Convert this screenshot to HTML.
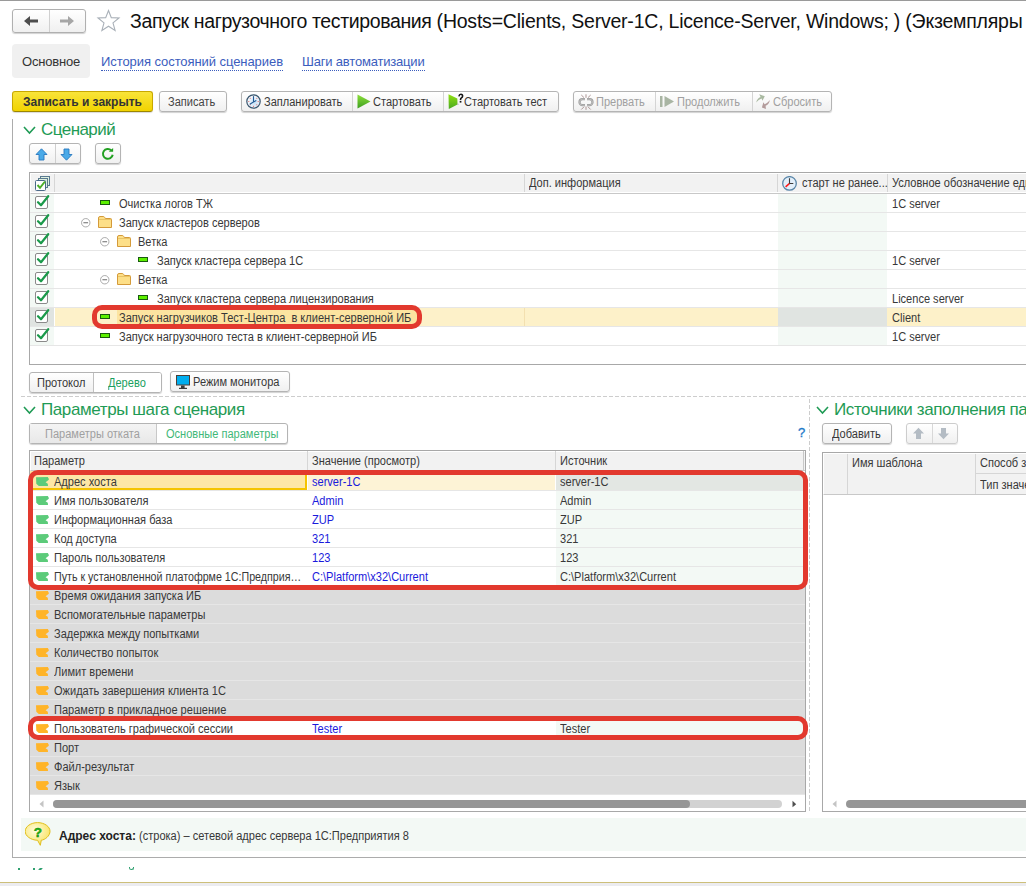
<!DOCTYPE html>
<html><head><meta charset="utf-8">
<style>
*{box-sizing:border-box;margin:0;padding:0}
html,body{width:1026px;height:886px;overflow:hidden;background:#fff;font-family:"Liberation Sans",sans-serif;color:#333}
.a{position:absolute}
.t{position:absolute;margin-top:1px;font-size:12px;letter-spacing:0;white-space:pre;line-height:14px;color:#383838;transform:scaleX(0.92);transform-origin:0 0}
.btn{position:absolute;border:1px solid #b4b4b4;border-radius:3px;background:linear-gradient(#fff,#f0f0f0);box-shadow:0 1px 1px rgba(0,0,0,.18)}
.div{position:absolute;top:0;bottom:0;width:1px;background:#cfcfcf}
.sec{position:absolute;font-size:17px;color:#1f9b55;white-space:nowrap;line-height:20px}
.chev{position:absolute;width:12px;height:8px}
.hl{position:absolute;height:1px;background:#e4e4e4}
.vl{position:absolute;width:1px;background:#c8c8c8}
</style></head><body>
<!-- top line -->
<div class="a" style="left:0;top:0;width:1026px;height:1px;background:#9a9a9a"></div>

<!-- nav buttons -->
<div class="btn" style="left:12px;top:9px;width:74px;height:24px;border-color:#b0b0b0"></div>
<div class="a" style="left:49px;top:10px;width:1px;height:22px;background:#d0d0d0"></div>
<svg class="a" style="left:23px;top:15px" width="16" height="12" viewBox="0 0 16 12"><path d="M1 6 L7 1 L7 4.5 L15 4.5 L15 7.5 L7 7.5 L7 11 Z" fill="#4d4d4d"/></svg>
<svg class="a" style="left:59px;top:15px" width="16" height="12" viewBox="0 0 16 12"><path d="M15 6 L9 1 L9 4.5 L1 4.5 L1 7.5 L9 7.5 L9 11 Z" fill="#a6a6a6"/></svg>
<svg class="a" style="left:96px;top:9px" width="25" height="24" viewBox="0 0 25 24"><path d="M12.5 1.5 L15.3 8.6 L23 9 L17 13.9 L19.1 21.4 L12.5 17.2 L5.9 21.4 L8 13.9 L2 9 L9.7 8.6 Z" fill="none" stroke="#a9b0b8" stroke-width="1.1"/></svg>

<div class="a" style="left:130px;top:9px;font-size:19.5px;letter-spacing:-0.22px;color:#111;white-space:nowrap;line-height:24px"><span style="letter-spacing:-0.37px">Запуск нагрузочного тестирования </span>(Hosts=Clients, Server-1C, Licence-Server, Windows; ) (Экземпляры</div>

<!-- tabs -->
<div class="a" style="left:12px;top:44px;width:78px;height:34px;background:#f0f0f0;border-radius:4px"></div>
<div class="a" style="left:22px;top:54px;font-size:13px;letter-spacing:-0.2px;color:#333;line-height:16px">Основное</div>
<div class="a" style="left:101px;top:54px;font-size:13px;letter-spacing:-0.07px;color:#3b5dbd;line-height:16px;border-bottom:1px dotted #3b5dbd;padding-bottom:0">История состояний сценариев</div>
<div class="a" style="left:302px;top:54px;font-size:13px;letter-spacing:-0.19px;color:#3b5dbd;line-height:16px;border-bottom:1px dotted #3b5dbd">Шаги автоматизации</div>

<!-- toolbar -->
<div class="a" style="left:12px;top:91px;width:141px;height:21px;border:1px solid #c8a800;border-bottom-color:#9c8600;border-radius:3px;background:linear-gradient(#f9e43a,#f1d300);box-shadow:0 1px 1px rgba(0,0,0,.15)"></div>
<div class="t" style="left:23px;top:94px;font-weight:bold;letter-spacing:0;color:#333;transform:none">Записать и закрыть</div>
<div class="btn" style="left:159px;top:91px;width:68px;height:21px"></div>
<div class="t" style="left:168px;top:94px;color:#444">Записать</div>

<div class="btn" style="left:241px;top:91px;width:318px;height:21px"></div>
<div class="a" style="left:352px;top:92px;width:1px;height:19px;background:#d4d4d4"></div>
<div class="a" style="left:443px;top:92px;width:1px;height:19px;background:#d4d4d4"></div>
<div class="t" style="left:264px;top:94px">Запланировать</div>
<div class="t" style="left:373px;top:94px">Стартовать</div>
<div class="t" style="left:464px;top:94px">Стартовать тест</div>

<div class="btn" style="left:573px;top:91px;width:259px;height:21px"></div>
<div class="a" style="left:655px;top:92px;width:1px;height:19px;background:#d4d4d4"></div>
<div class="a" style="left:752px;top:92px;width:1px;height:19px;background:#d4d4d4"></div>
<div class="t" style="left:596px;top:94px;color:#a0a0a0">Прервать</div>
<div class="t" style="left:677px;top:94px;color:#a0a0a0">Продолжить</div>
<div class="t" style="left:773px;top:94px;color:#a0a0a0">Сбросить</div>

<!-- toolbar icons -->
<svg class="a" style="left:246px;top:94px" width="15" height="15" viewBox="0 0 15 15"><defs><radialGradient id="cg" cx="0.6" cy="0.6" r="0.7"><stop offset="0" stop-color="#c8e0f4"/><stop offset="1" stop-color="#fff"/></radialGradient></defs><circle cx="7.5" cy="7.5" r="6.7" fill="url(#cg)" stroke="#3a566e" stroke-width="1.2"/><g fill="#e05050"><circle cx="7.5" cy="2.8" r="0.55"/><circle cx="7.5" cy="12.2" r="0.55"/><circle cx="2.8" cy="7.5" r="0.55"/><circle cx="12.2" cy="7.5" r="0.55"/><circle cx="4.2" cy="4.2" r="0.5"/><circle cx="10.8" cy="4.2" r="0.5"/><circle cx="4.2" cy="10.8" r="0.5"/><circle cx="10.8" cy="10.8" r="0.5"/></g><path d="M7.5 2.2 V8 L3.8 10.3 M7.5 8 L10.3 6.5" fill="none" stroke="#1f5a96" stroke-width="1.1"/></svg>
<svg class="a" style="left:357px;top:94px" width="14" height="15" viewBox="0 0 14 15"><defs><linearGradient id="pg" x1="0" y1="0" x2="0" y2="1"><stop offset="0" stop-color="#8ee03a"/><stop offset="1" stop-color="#3c9e20"/></linearGradient></defs><path d="M0.5 0.5 L13.5 7.5 L0.5 14.5 Z" fill="url(#pg)"/></svg>
<svg class="a" style="left:448px;top:93px" width="16" height="17" viewBox="0 0 16 17"><defs><linearGradient id="pg2" x1="0" y1="0" x2="0" y2="1"><stop offset="0" stop-color="#90e010"/><stop offset="1" stop-color="#4aa822"/></linearGradient></defs><path d="M0.5 1.3 L9.3 5.4 L9.5 11.6 L0.8 16 Z" fill="url(#pg2)"/><path d="M9.5 10 L10.8 11.2 L9.5 12.2 Z" fill="#b0a8b8"/><path d="M10.9 3.3 Q11.3 1.3 12.9 1.3 Q14.6 1.3 14.6 3 Q14.6 4.1 13.4 4.9 Q12.5 5.5 12.5 6.9" fill="none" stroke="#151515" stroke-width="1.6"/><rect x="11.7" y="7.9" width="1.7" height="1.7" fill="#151515"/></svg>
<svg class="a" style="left:578px;top:94px" width="16" height="16" viewBox="0 0 16 16"><g fill="none"><path d="M7 5.2 H4.5 A3 3 0 0 0 4.5 11.2 H7" stroke="#9c9c9c" stroke-width="2.2"/><path d="M9 5.2 H11.5 A3 3 0 0 1 11.5 11.2 H9" stroke="#9c9c9c" stroke-width="2.2"/><path d="M7 5.2 H4.5 A3 3 0 0 0 4.5 11.2 H7 M9 5.2 H11.5 A3 3 0 0 1 11.5 11.2 H9" stroke="#d4d4d4" stroke-width="0.6"/></g><g stroke="#a48a8a" stroke-width="0.9"><path d="M8 0.3 V3.8 M3.3 1 L6 3.6 M12.7 1 L10 3.6 M8 12.5 V15.8 M3.3 15.5 L6 12.8 M12.7 15.5 L10 12.8"/></g></svg>
<svg class="a" style="left:660px;top:96px" width="15" height="11" viewBox="0 0 15 11"><rect x="0" y="0" width="2.5" height="11" fill="#a9b5a3"/><path d="M4.5 0 L14 5.5 L4.5 11 Z" fill="#a9b5a3"/></svg>
<svg class="a" style="left:756px;top:94px" width="15" height="16" viewBox="0 0 15 16"><path d="M0.2 8.4 C0.8 5.5 2.5 3.8 4.6 2.9 L3.2 0.2 L8.8 2.2 L6.4 6.7 L5.6 4.6 C3.5 5.4 1.8 6.8 0.2 8.4 Z" fill="#a9b9a1"/><path d="M13.9 5.9 C13.4 9 11.8 10.8 9.6 11.8 L9.9 14.9 L5.9 13.4 L7.4 8.2 L8.6 10.2 C10.8 9.3 12.5 7.8 13.9 5.9 Z" fill="#b39b9b"/></svg>
<!-- section frame -->
<div class="a" style="left:12px;top:119px;width:1px;height:739px;background:#acacac"></div>
<div class="a" style="left:12px;top:857px;width:1014px;height:1px;background:#acacac"></div>

<!-- scenario header -->
<svg class="a" style="left:23px;top:126px" width="13" height="9" viewBox="0 0 13 9"><path d="M1 1 L6.5 7 L12 1" fill="none" stroke="#1f9b55" stroke-width="1.6"/></svg>
<div class="sec" style="left:41px;top:120px;letter-spacing:-0.55px">Сценарий</div>
<div class="btn" style="left:29px;top:143px;width:52px;height:21px"></div>
<div class="a" style="left:55px;top:144px;width:1px;height:19px;background:#cfcfcf"></div>
<svg class="a" style="left:35px;top:148px" width="13" height="13" viewBox="0 0 13 13"><path d="M6.5 0.8 L12 6.5 H9 V12 H4 V6.5 H1 Z" fill="#4aaae8" stroke="#2878c0" stroke-width="0.9"/></svg>
<svg class="a" style="left:60px;top:148px" width="13" height="13" viewBox="0 0 13 13"><path d="M6.5 12.2 L12 6.5 H9 V1 H4 V6.5 H1 Z" fill="#4aaae8" stroke="#2878c0" stroke-width="0.9"/></svg>
<div class="btn" style="left:95px;top:143px;width:26px;height:21px"></div>
<svg class="a" style="left:98px;top:144px" width="22" height="20" viewBox="0 0 22 20"><path d="M14.7 10.75 A4.9 4.9 0 1 1 13.2 6.3" fill="none" stroke="#22a022" stroke-width="2"/><path d="M15.1 3.9 L10.8 7.8 L15.1 7.8 Z" fill="#22a022"/></svg>
<!-- table 1 -->
<div class="a" style="left:29px;top:172px;width:997px;height:193px;border:1px solid #a8a8a8;border-right:none;background:#fff"></div>
<div class="a" style="left:30px;top:173px;width:996px;height:21px;background:#f2f2f2;border-top:1px solid #fff;border-left:1px solid #fff;border-bottom:1px solid #c8c8c8;box-shadow:inset 0 -1px #fff"></div>
<div class="a" style="left:54px;top:174px;width:1px;height:18px;background:#d6d6d6"></div>
<div class="a" style="left:524px;top:174px;width:1px;height:18px;background:#d6d6d6"></div>
<div class="a" style="left:777px;top:174px;width:1px;height:18px;background:#d6d6d6"></div>
<div class="a" style="left:887px;top:174px;width:1px;height:18px;background:#d6d6d6"></div>
<svg class="a" style="left:34px;top:175px" width="17" height="17" viewBox="0 0 17 17"><rect x="6.5" y="1.5" width="9" height="9" fill="#dff0e0" stroke="#5a7a90"/><rect x="4.5" y="3.5" width="9" height="9" fill="#dff0e0" stroke="#5a7a90"/><rect x="1.5" y="5.5" width="10" height="10" rx="1" fill="#fff" stroke="#4a6a88"/><path d="M3.5 10 L6 12.8 L11 6.5" fill="none" stroke="#4cae2a" stroke-width="2"/></svg>
<div class="t" style="left:529px;top:175px">Доп. информация</div>
<svg class="a" style="left:782px;top:176px" width="15" height="15" viewBox="0 0 15 15"><circle cx="7.5" cy="7.4" r="6.8" fill="#e2effa" stroke="#5a86a8" stroke-width="1.3"/><path d="M7.5 2.2 V7.5 H11.3" fill="none" stroke="#3c3c3c" stroke-width="1.1"/><path d="M7.3 7.6 L3.6 10.9" stroke="#ff1a1a" stroke-width="1.5"/></svg>
<div class="t" style="left:801px;top:175px;margin-left:1px">старт не ранее...</div>
<div class="t" style="left:892px;top:175px">Условное обозначение единицы</div>
<div class="a" style="left:30px;top:194px;width:24px;height:151px;background:#f3f9f5"></div>
<div class="a" style="left:778px;top:194px;width:109px;height:151px;background:#f3f9f5"></div>
<div class="hl" style="left:30px;top:212px;width:996px;background:#e6e6e6"></div>
<svg class="a" style="left:35px;top:195px" width="15" height="14" viewBox="0 0 15 14"><rect x="0.5" y="1.5" width="12" height="12" rx="1.5" fill="#fff" stroke="#8a8a8a" stroke-width="1"/><path d="M3 7.2 L6 10.3 L13.2 1.2" fill="none" stroke="#1a9a4a" stroke-width="2.2" stroke-linecap="round" stroke-linejoin="round"/></svg>
<div class="a" style="left:100px;top:200px;width:10px;height:5px;background:#5cf000;border:1px solid #1a5a10"></div>
<div class="t" style="left:119px;top:196px">Очистка логов ТЖ</div>
<div class="t" style="left:892px;top:196px">1C server</div>
<div class="hl" style="left:30px;top:231px;width:996px;background:#e6e6e6"></div>
<svg class="a" style="left:35px;top:214px" width="15" height="14" viewBox="0 0 15 14"><rect x="0.5" y="1.5" width="12" height="12" rx="1.5" fill="#fff" stroke="#8a8a8a" stroke-width="1"/><path d="M3 7.2 L6 10.3 L13.2 1.2" fill="none" stroke="#1a9a4a" stroke-width="2.2" stroke-linecap="round" stroke-linejoin="round"/></svg>
<svg class="a" style="left:81px;top:218px" width="10" height="10" viewBox="0 0 10 10"><circle cx="4.75" cy="4.75" r="4.2" fill="#fff" stroke="#a0a0a0" stroke-width="0.9"/><path d="M2.4 4.75 H7.1" stroke="#6a6a6a" stroke-width="1"/></svg>
<svg class="a" style="left:98px;top:216px" width="14" height="12" viewBox="0 0 14 12"><path d="M0.5 2 Q0.5 0.5 2 0.5 H5.3 Q6.2 0.5 6.7 1.4 L7.3 2.5 H12.5 Q13.5 2.5 13.5 3.5 V11.5 H0.5 Z" fill="#fddf88" stroke="#d49a3a" stroke-width="1"/><path d="M1 3.5 H13" stroke="#e9c466" stroke-width="1"/></svg>
<div class="t" style="left:119px;top:215px">Запуск кластеров серверов</div>
<div class="hl" style="left:30px;top:250px;width:996px;background:#e6e6e6"></div>
<svg class="a" style="left:35px;top:233px" width="15" height="14" viewBox="0 0 15 14"><rect x="0.5" y="1.5" width="12" height="12" rx="1.5" fill="#fff" stroke="#8a8a8a" stroke-width="1"/><path d="M3 7.2 L6 10.3 L13.2 1.2" fill="none" stroke="#1a9a4a" stroke-width="2.2" stroke-linecap="round" stroke-linejoin="round"/></svg>
<svg class="a" style="left:100px;top:237px" width="10" height="10" viewBox="0 0 10 10"><circle cx="4.75" cy="4.75" r="4.2" fill="#fff" stroke="#a0a0a0" stroke-width="0.9"/><path d="M2.4 4.75 H7.1" stroke="#6a6a6a" stroke-width="1"/></svg>
<svg class="a" style="left:117px;top:235px" width="14" height="12" viewBox="0 0 14 12"><path d="M0.5 2 Q0.5 0.5 2 0.5 H5.3 Q6.2 0.5 6.7 1.4 L7.3 2.5 H12.5 Q13.5 2.5 13.5 3.5 V11.5 H0.5 Z" fill="#fddf88" stroke="#d49a3a" stroke-width="1"/><path d="M1 3.5 H13" stroke="#e9c466" stroke-width="1"/></svg>
<div class="t" style="left:138px;top:234px">Ветка</div>
<div class="hl" style="left:30px;top:269px;width:996px;background:#e6e6e6"></div>
<svg class="a" style="left:35px;top:252px" width="15" height="14" viewBox="0 0 15 14"><rect x="0.5" y="1.5" width="12" height="12" rx="1.5" fill="#fff" stroke="#8a8a8a" stroke-width="1"/><path d="M3 7.2 L6 10.3 L13.2 1.2" fill="none" stroke="#1a9a4a" stroke-width="2.2" stroke-linecap="round" stroke-linejoin="round"/></svg>
<div class="a" style="left:138px;top:257px;width:10px;height:5px;background:#5cf000;border:1px solid #1a5a10"></div>
<div class="t" style="left:157px;top:253px">Запуск кластера сервера 1С</div>
<div class="t" style="left:892px;top:253px">1C server</div>
<div class="hl" style="left:30px;top:288px;width:996px;background:#e6e6e6"></div>
<svg class="a" style="left:35px;top:271px" width="15" height="14" viewBox="0 0 15 14"><rect x="0.5" y="1.5" width="12" height="12" rx="1.5" fill="#fff" stroke="#8a8a8a" stroke-width="1"/><path d="M3 7.2 L6 10.3 L13.2 1.2" fill="none" stroke="#1a9a4a" stroke-width="2.2" stroke-linecap="round" stroke-linejoin="round"/></svg>
<svg class="a" style="left:100px;top:275px" width="10" height="10" viewBox="0 0 10 10"><circle cx="4.75" cy="4.75" r="4.2" fill="#fff" stroke="#a0a0a0" stroke-width="0.9"/><path d="M2.4 4.75 H7.1" stroke="#6a6a6a" stroke-width="1"/></svg>
<svg class="a" style="left:117px;top:273px" width="14" height="12" viewBox="0 0 14 12"><path d="M0.5 2 Q0.5 0.5 2 0.5 H5.3 Q6.2 0.5 6.7 1.4 L7.3 2.5 H12.5 Q13.5 2.5 13.5 3.5 V11.5 H0.5 Z" fill="#fddf88" stroke="#d49a3a" stroke-width="1"/><path d="M1 3.5 H13" stroke="#e9c466" stroke-width="1"/></svg>
<div class="t" style="left:138px;top:272px">Ветка</div>
<div class="hl" style="left:30px;top:307px;width:996px;background:#e6e6e6"></div>
<svg class="a" style="left:35px;top:290px" width="15" height="14" viewBox="0 0 15 14"><rect x="0.5" y="1.5" width="12" height="12" rx="1.5" fill="#fff" stroke="#8a8a8a" stroke-width="1"/><path d="M3 7.2 L6 10.3 L13.2 1.2" fill="none" stroke="#1a9a4a" stroke-width="2.2" stroke-linecap="round" stroke-linejoin="round"/></svg>
<div class="a" style="left:138px;top:295px;width:10px;height:5px;background:#5cf000;border:1px solid #1a5a10"></div>
<div class="t" style="left:157px;top:291px">Запуск кластера сервера лицензирования</div>
<div class="t" style="left:892px;top:291px">Licence server</div>
<div class="a" style="left:30px;top:308px;width:24px;height:18px;background:#e0e4e1"></div>
<div class="a" style="left:55px;top:308px;width:971px;height:18px;background:#fdf1c9"></div>
<div class="a" style="left:117px;top:308px;width:300px;height:18px;background:#fce4a0"></div>
<div class="a" style="left:524px;top:308px;width:1px;height:18px;background:#f3e0b0"></div>
<div class="a" style="left:778px;top:308px;width:109px;height:18px;background:#e0e4e1"></div>
<div class="hl" style="left:30px;top:326px;width:996px;background:#e6e6e6"></div>
<svg class="a" style="left:35px;top:309px" width="15" height="14" viewBox="0 0 15 14"><rect x="0.5" y="1.5" width="12" height="12" rx="1.5" fill="#fff" stroke="#8a8a8a" stroke-width="1"/><path d="M3 7.2 L6 10.3 L13.2 1.2" fill="none" stroke="#1a9a4a" stroke-width="2.2" stroke-linecap="round" stroke-linejoin="round"/></svg>
<div class="a" style="left:100px;top:314px;width:10px;height:5px;background:#5cf000;border:1px solid #1a5a10"></div>
<div class="t" style="left:119px;top:310px">Запуск нагрузчиков Тест-Центра  в клиент-серверной ИБ</div>
<div class="t" style="left:892px;top:310px">Client</div>
<div class="hl" style="left:30px;top:345px;width:996px;background:#e6e6e6"></div>
<svg class="a" style="left:35px;top:328px" width="15" height="14" viewBox="0 0 15 14"><rect x="0.5" y="1.5" width="12" height="12" rx="1.5" fill="#fff" stroke="#8a8a8a" stroke-width="1"/><path d="M3 7.2 L6 10.3 L13.2 1.2" fill="none" stroke="#1a9a4a" stroke-width="2.2" stroke-linecap="round" stroke-linejoin="round"/></svg>
<div class="a" style="left:100px;top:333px;width:10px;height:5px;background:#5cf000;border:1px solid #1a5a10"></div>
<div class="t" style="left:119px;top:329px">Запуск нагрузочного теста в клиент-серверной ИБ</div>
<div class="t" style="left:892px;top:329px">1C server</div>
<div class="a" style="left:92px;top:305px;width:330px;height:24px;border:5px solid #e2392e;border-radius:10px"></div>
<div class="btn" style="left:29px;top:372px;width:133px;height:21px"></div>
<div class="a" style="left:94px;top:373px;width:67px;height:19px;background:#fff;border-radius:0 2px 2px 0"></div>
<div class="a" style="left:93px;top:373px;width:1px;height:19px;background:#c0c0c0"></div>
<div class="t" style="left:37px;top:375px">Протокол</div>
<div class="t" style="left:108px;top:375px;color:#1aa060">Дерево</div>
<div class="btn" style="left:170px;top:371px;width:120px;height:21px"></div>
<svg class="a" style="left:176px;top:375px" width="14" height="14" viewBox="0 0 14 14"><rect x="0.5" y="0.5" width="13" height="9.5" fill="#00aeef" stroke="#4a3e38"/><rect x="5" y="10.5" width="3.6" height="2.5" fill="#3c3c3c"/><rect x="3" y="12.8" width="8" height="1.3" fill="#3c3c3c"/></svg>
<div class="t" style="left:193px;top:374px">Режим монитора</div>
<!-- params section -->
<div class="a" style="left:21px;top:396px;width:1005px;height:1px;background:repeating-linear-gradient(90deg,#cdcdcd 0 4px,transparent 4px 6px)"></div>
<div class="a" style="left:809px;top:399px;width:1px;height:412px;background:repeating-linear-gradient(180deg,#cdcdcd 0 4px,transparent 4px 6px)"></div>
<svg class="a" style="left:23px;top:406px" width="13" height="9" viewBox="0 0 13 9"><path d="M1 1 L6.5 7 L12 1" fill="none" stroke="#1f9b55" stroke-width="1.6"/></svg>
<div class="sec" style="left:41px;top:400px;letter-spacing:-0.4px">Параметры шага сценария</div>
<div class="btn" style="left:29px;top:423px;width:259px;height:21px;background:#fff"></div>
<div class="a" style="left:30px;top:424px;width:126px;height:19px;background:linear-gradient(#f4f4f4,#e8e8e8)"></div>
<div class="a" style="left:156px;top:424px;width:1px;height:19px;background:#c8c8c8"></div>
<div class="t" style="left:45px;top:426px;color:#a0a0a0">Параметры отката</div>
<div class="t" style="left:166px;top:426px;color:#3fb878">Основные параметры</div>
<div class="a" style="left:798px;top:425px;font-size:13px;color:#1a78c8;line-height:16px;-webkit-text-stroke:0.3px #1a78c8">?</div>
<div class="a" style="left:29px;top:450px;width:777px;height:362px;border:1px solid #a8a8a8;background:#fff"></div>
<div class="a" style="left:30px;top:451px;width:775px;height:20px;background:#f2f2f2;border-top:1px solid #fff;border-left:1px solid #fff;border-bottom:1px solid #c8c8c8"></div>
<div class="a" style="left:803px;top:451px;width:1px;height:19px;background:#c8c8c8"></div>
<div class="a" style="left:307px;top:451px;width:1px;height:19px;background:#d6d6d6"></div>
<div class="a" style="left:555px;top:451px;width:1px;height:19px;background:#d6d6d6"></div>
<div class="t" style="left:34px;top:453px">Параметр</div>
<div class="t" style="left:312px;top:453px">Значение (просмотр)</div>
<div class="t" style="left:560px;top:453px">Источник</div>
<div class="a" style="left:30px;top:471px;width:277px;height:19px;background:#fde7a6;border:2px solid #f5c400;border-top:none;border-left:none"></div>
<div class="a" style="left:308px;top:471px;width:247px;height:19px;background:#fdf3d6"></div>
<div class="a" style="left:556px;top:471px;width:247px;height:19px;background:#e3e7e3"></div>
<svg class="a" style="left:36px;top:477px" width="13" height="9" viewBox="0 0 13 9"><path d="M0 0.3 L11.8 0 L13 2.3 L12.2 3.2 L9.6 5.3 L11.8 6.8 L12 9 L2.8 9 L0.3 6.8 Z" fill="#5ccb7a"/></svg>
<div class="t" style="left:54px;top:474px">Адрес хоста</div>
<div class="t" style="left:312px;top:474px;color:#1a1adc">server-1C</div>
<div class="t" style="left:560px;top:474px">server-1C</div>
<div class="a" style="left:556px;top:491px;width:247px;height:18px;background:#f3f9f5"></div>
<svg class="a" style="left:36px;top:496px" width="13" height="9" viewBox="0 0 13 9"><path d="M0 0.3 L11.8 0 L13 2.3 L12.2 3.2 L9.6 5.3 L11.8 6.8 L12 9 L2.8 9 L0.3 6.8 Z" fill="#5ccb7a"/></svg>
<div class="t" style="left:54px;top:493px">Имя пользователя</div>
<div class="t" style="left:312px;top:493px;color:#1a1adc">Admin</div>
<div class="t" style="left:560px;top:493px">Admin</div>
<div class="a" style="left:556px;top:510px;width:247px;height:18px;background:#f3f9f5"></div>
<svg class="a" style="left:36px;top:515px" width="13" height="9" viewBox="0 0 13 9"><path d="M0 0.3 L11.8 0 L13 2.3 L12.2 3.2 L9.6 5.3 L11.8 6.8 L12 9 L2.8 9 L0.3 6.8 Z" fill="#5ccb7a"/></svg>
<div class="t" style="left:54px;top:512px">Информационная база</div>
<div class="t" style="left:312px;top:512px;color:#1a1adc">ZUP</div>
<div class="t" style="left:560px;top:512px">ZUP</div>
<div class="a" style="left:556px;top:529px;width:247px;height:18px;background:#f3f9f5"></div>
<svg class="a" style="left:36px;top:534px" width="13" height="9" viewBox="0 0 13 9"><path d="M0 0.3 L11.8 0 L13 2.3 L12.2 3.2 L9.6 5.3 L11.8 6.8 L12 9 L2.8 9 L0.3 6.8 Z" fill="#5ccb7a"/></svg>
<div class="t" style="left:54px;top:531px">Код доступа</div>
<div class="t" style="left:312px;top:531px;color:#1a1adc">321</div>
<div class="t" style="left:560px;top:531px">321</div>
<div class="a" style="left:556px;top:548px;width:247px;height:18px;background:#f3f9f5"></div>
<svg class="a" style="left:36px;top:553px" width="13" height="9" viewBox="0 0 13 9"><path d="M0 0.3 L11.8 0 L13 2.3 L12.2 3.2 L9.6 5.3 L11.8 6.8 L12 9 L2.8 9 L0.3 6.8 Z" fill="#5ccb7a"/></svg>
<div class="t" style="left:54px;top:550px">Пароль пользователя</div>
<div class="t" style="left:312px;top:550px;color:#1a1adc">123</div>
<div class="t" style="left:560px;top:550px">123</div>
<div class="a" style="left:556px;top:567px;width:247px;height:18px;background:#f3f9f5"></div>
<svg class="a" style="left:36px;top:572px" width="13" height="9" viewBox="0 0 13 9"><path d="M0 0.3 L11.8 0 L13 2.3 L12.2 3.2 L9.6 5.3 L11.8 6.8 L12 9 L2.8 9 L0.3 6.8 Z" fill="#5ccb7a"/></svg>
<div class="t" style="left:54px;top:569px;transform:scaleX(0.89)">Путь к установленной платофрме 1С:Предприя…</div>
<div class="t" style="left:312px;top:569px;color:#1a1adc">C:\Platform\x32\Current</div>
<div class="t" style="left:560px;top:569px">C:\Platform\x32\Current</div>
<div class="a" style="left:30px;top:586px;width:775px;height:18px;background:#dcdcdc"></div>
<svg class="a" style="left:36px;top:591px" width="13" height="9" viewBox="0 0 13 9"><path d="M0 0.3 L11.8 0 L13 2.3 L12.2 3.2 L9.6 5.3 L11.8 6.8 L12 9 L2.8 9 L0.3 6.8 Z" fill="#ffb428"/></svg>
<div class="t" style="left:54px;top:588px">Время ожидания запуска ИБ</div>
<div class="a" style="left:30px;top:605px;width:775px;height:18px;background:#dcdcdc"></div>
<svg class="a" style="left:36px;top:610px" width="13" height="9" viewBox="0 0 13 9"><path d="M0 0.3 L11.8 0 L13 2.3 L12.2 3.2 L9.6 5.3 L11.8 6.8 L12 9 L2.8 9 L0.3 6.8 Z" fill="#ffb428"/></svg>
<div class="t" style="left:54px;top:607px">Вспомогательные параметры</div>
<div class="a" style="left:30px;top:624px;width:775px;height:18px;background:#dcdcdc"></div>
<svg class="a" style="left:36px;top:629px" width="13" height="9" viewBox="0 0 13 9"><path d="M0 0.3 L11.8 0 L13 2.3 L12.2 3.2 L9.6 5.3 L11.8 6.8 L12 9 L2.8 9 L0.3 6.8 Z" fill="#ffb428"/></svg>
<div class="t" style="left:54px;top:626px">Задержка между попытками</div>
<div class="a" style="left:30px;top:643px;width:775px;height:18px;background:#dcdcdc"></div>
<svg class="a" style="left:36px;top:648px" width="13" height="9" viewBox="0 0 13 9"><path d="M0 0.3 L11.8 0 L13 2.3 L12.2 3.2 L9.6 5.3 L11.8 6.8 L12 9 L2.8 9 L0.3 6.8 Z" fill="#ffb428"/></svg>
<div class="t" style="left:54px;top:645px">Количество попыток</div>
<div class="a" style="left:30px;top:662px;width:775px;height:18px;background:#dcdcdc"></div>
<svg class="a" style="left:36px;top:667px" width="13" height="9" viewBox="0 0 13 9"><path d="M0 0.3 L11.8 0 L13 2.3 L12.2 3.2 L9.6 5.3 L11.8 6.8 L12 9 L2.8 9 L0.3 6.8 Z" fill="#ffb428"/></svg>
<div class="t" style="left:54px;top:664px">Лимит времени</div>
<div class="a" style="left:30px;top:681px;width:775px;height:18px;background:#dcdcdc"></div>
<svg class="a" style="left:36px;top:686px" width="13" height="9" viewBox="0 0 13 9"><path d="M0 0.3 L11.8 0 L13 2.3 L12.2 3.2 L9.6 5.3 L11.8 6.8 L12 9 L2.8 9 L0.3 6.8 Z" fill="#ffb428"/></svg>
<div class="t" style="left:54px;top:683px">Ожидать завершения клиента 1С</div>
<div class="a" style="left:30px;top:700px;width:775px;height:18px;background:#dcdcdc"></div>
<svg class="a" style="left:36px;top:705px" width="13" height="9" viewBox="0 0 13 9"><path d="M0 0.3 L11.8 0 L13 2.3 L12.2 3.2 L9.6 5.3 L11.8 6.8 L12 9 L2.8 9 L0.3 6.8 Z" fill="#ffb428"/></svg>
<div class="t" style="left:54px;top:702px">Параметр в прикладное решение</div>
<div class="a" style="left:556px;top:719px;width:247px;height:18px;background:#f3f9f5"></div>
<svg class="a" style="left:36px;top:724px" width="13" height="9" viewBox="0 0 13 9"><path d="M0 0.3 L11.8 0 L13 2.3 L12.2 3.2 L9.6 5.3 L11.8 6.8 L12 9 L2.8 9 L0.3 6.8 Z" fill="#ffb428"/></svg>
<div class="t" style="left:54px;top:721px">Пользователь графической сессии</div>
<div class="t" style="left:312px;top:721px;color:#1a1adc">Tester</div>
<div class="t" style="left:560px;top:721px">Tester</div>
<div class="a" style="left:30px;top:738px;width:775px;height:18px;background:#dcdcdc"></div>
<svg class="a" style="left:36px;top:743px" width="13" height="9" viewBox="0 0 13 9"><path d="M0 0.3 L11.8 0 L13 2.3 L12.2 3.2 L9.6 5.3 L11.8 6.8 L12 9 L2.8 9 L0.3 6.8 Z" fill="#ffb428"/></svg>
<div class="t" style="left:54px;top:740px">Порт</div>
<div class="a" style="left:30px;top:757px;width:775px;height:18px;background:#dcdcdc"></div>
<svg class="a" style="left:36px;top:762px" width="13" height="9" viewBox="0 0 13 9"><path d="M0 0.3 L11.8 0 L13 2.3 L12.2 3.2 L9.6 5.3 L11.8 6.8 L12 9 L2.8 9 L0.3 6.8 Z" fill="#ffb428"/></svg>
<div class="t" style="left:54px;top:759px">Файл-результат</div>
<div class="a" style="left:30px;top:776px;width:775px;height:18px;background:#dcdcdc"></div>
<svg class="a" style="left:36px;top:781px" width="13" height="9" viewBox="0 0 13 9"><path d="M0 0.3 L11.8 0 L13 2.3 L12.2 3.2 L9.6 5.3 L11.8 6.8 L12 9 L2.8 9 L0.3 6.8 Z" fill="#ffb428"/></svg>
<div class="t" style="left:54px;top:778px">Язык</div>
<div class="hl" style="left:30px;top:490px;width:775px;background:#e6e6e6"></div>
<div class="hl" style="left:30px;top:509px;width:775px;background:#e6e6e6"></div>
<div class="hl" style="left:30px;top:528px;width:775px;background:#e6e6e6"></div>
<div class="hl" style="left:30px;top:547px;width:775px;background:#e6e6e6"></div>
<div class="hl" style="left:30px;top:566px;width:775px;background:#e6e6e6"></div>
<div class="hl" style="left:30px;top:585px;width:775px;background:#e6e6e6"></div>
<div class="hl" style="left:30px;top:604px;width:775px;background:#e6e6e6"></div>
<div class="hl" style="left:30px;top:623px;width:775px;background:#e6e6e6"></div>
<div class="hl" style="left:30px;top:642px;width:775px;background:#e6e6e6"></div>
<div class="hl" style="left:30px;top:661px;width:775px;background:#e6e6e6"></div>
<div class="hl" style="left:30px;top:680px;width:775px;background:#e6e6e6"></div>
<div class="hl" style="left:30px;top:699px;width:775px;background:#e6e6e6"></div>
<div class="hl" style="left:30px;top:718px;width:775px;background:#e6e6e6"></div>
<div class="hl" style="left:30px;top:737px;width:775px;background:#e6e6e6"></div>
<div class="hl" style="left:30px;top:756px;width:775px;background:#e6e6e6"></div>
<div class="hl" style="left:30px;top:775px;width:775px;background:#e6e6e6"></div>
<div class="hl" style="left:30px;top:794px;width:775px;background:#e6e6e6"></div>
<div class="a" style="left:30px;top:795px;width:775px;height:16px;background:#fff"></div>
<svg class="a" style="left:39px;top:800px" width="5" height="8" viewBox="0 0 5 8"><path d="M4.5 0.5 L0.5 4 L4.5 7.5 Z" fill="#c4c4c4"/></svg>
<div class="a" style="left:53px;top:800px;width:729px;height:8px;border-radius:4px;background:#d2d2d2"></div>
<div class="a" style="left:53px;top:800px;width:637px;height:8px;border-radius:4px;background:#969696"></div>
<svg class="a" style="left:792px;top:800px" width="5" height="8" viewBox="0 0 5 8"><path d="M0.5 0.8 L4.2 4.2 L0.5 7.3 Z" fill="#505050"/></svg>
<div class="a" style="left:28px;top:470px;width:780px;height:120px;border:5px solid #e2392e;border-radius:10px"></div>
<div class="a" style="left:28px;top:716px;width:780px;height:24px;border:5px solid #e2392e;border-radius:10px"></div>
<svg class="a" style="left:816px;top:406px" width="13" height="9" viewBox="0 0 13 9"><path d="M1 1 L6.5 7 L12 1" fill="none" stroke="#1f9b55" stroke-width="1.6"/></svg>
<div class="sec" style="left:834px;top:400px;letter-spacing:-0.4px">Источники заполнения параметров</div>
<div class="btn" style="left:822px;top:423px;width:70px;height:21px"></div>
<div class="t" style="left:832px;top:426px">Добавить</div>
<div class="btn" style="left:906px;top:423px;width:52px;height:21px;box-shadow:0 1px 1px rgba(0,0,0,.1);border-color:#cdcdcd"></div>
<div class="a" style="left:932px;top:424px;width:1px;height:19px;background:#d8d8d8"></div>
<svg class="a" style="left:912px;top:427px" width="13" height="13" viewBox="0 0 13 13"><path d="M6.5 0.8 L12 6.5 H9 V12 H4 V6.5 H1 Z" fill="#b4bcc4"/></svg>
<svg class="a" style="left:937px;top:427px" width="13" height="13" viewBox="0 0 13 13"><path d="M6.5 12.2 L12 6.5 H9 V1 H4 V6.5 H1 Z" fill="#b4bcc4"/></svg>
<div class="a" style="left:822px;top:452px;width:204px;height:360px;border:1px solid #a8a8a8;border-right:none;background:#fff"></div>
<div class="a" style="left:823px;top:453px;width:203px;height:42px;background:#f2f2f2;border-top:1px solid #fff;border-left:1px solid #fff;border-bottom:1px solid #c8c8c8"></div>
<div class="a" style="left:847px;top:454px;width:1px;height:40px;background:#d6d6d6"></div>
<div class="a" style="left:975px;top:454px;width:1px;height:40px;background:#d6d6d6"></div>
<div class="a" style="left:976px;top:473px;width:50px;height:1px;background:#d6d6d6"></div>
<div class="t" style="left:852px;top:455px">Имя шаблона</div>
<div class="t" style="left:980px;top:455px">Способ заполнения</div>
<div class="t" style="left:980px;top:477px">Тип значения</div>
<svg class="a" style="left:832px;top:800px" width="5" height="8" viewBox="0 0 5 8"><path d="M4.5 0.5 L0.5 4 L4.5 7.5 Z" fill="#c4c4c4"/></svg>
<div class="a" style="left:846px;top:800px;width:190px;height:8px;border-radius:4px;background:#969696"></div>
<div class="a" style="left:21px;top:818px;width:1005px;height:33px;background:#f3f9f5"></div>
<svg class="a" style="left:25px;top:822px" width="26" height="25" viewBox="0 0 26 25"><defs><radialGradient id="qg" cx="0.4" cy="0.35" r="0.75"><stop offset="0" stop-color="#fffce0"/><stop offset="1" stop-color="#f8e050"/></radialGradient></defs><path d="M12.6 0.6 C19.5 0.6 25 4.6 25 9.3 C25 14 20 17.8 16.3 18.2 L15.3 23.3 L12.6 18.3 C5.5 18 0.2 14 0.2 9.3 C0.2 4.6 5.7 0.6 12.6 0.6 Z" fill="url(#qg)" stroke="#e0be1c" stroke-width="1"/><text x="12.8" y="14.5" text-anchor="middle" font-family="Liberation Sans" font-weight="bold" font-size="13.5" fill="#20c010" stroke="#0a800a" stroke-width="0.4">?</text></svg>
<div class="t" style="left:59px;top:828px;font-weight:bold;letter-spacing:0;color:#222;transform:none">Адрес хоста:</div>
<div class="t" style="left:139px;top:828px">(строка) – сетевой адрес сервера 1С:Предприятия 8</div>
<!-- bottom -->
<div class="a" style="left:18px;top:868px;width:2px;height:2px;background:#30a070"></div>
<div class="a" style="left:33px;top:868px;width:2px;height:2px;background:#30a070"></div>
<div class="a" style="left:39px;top:868px;width:3px;height:2px;background:#30a070;transform:skewX(-40deg)"></div>
<div class="a" style="left:129px;top:867px;width:5px;height:3px;border:1px solid #30a070;border-top:none;border-radius:0 0 3px 3px"></div>

<div class="a" style="left:0;top:882px;width:1026px;height:1px;background:#cdbf7a"></div>
<div class="a" style="left:0;top:883px;width:1026px;height:3px;background:#ececf0"></div>
</body></html>
